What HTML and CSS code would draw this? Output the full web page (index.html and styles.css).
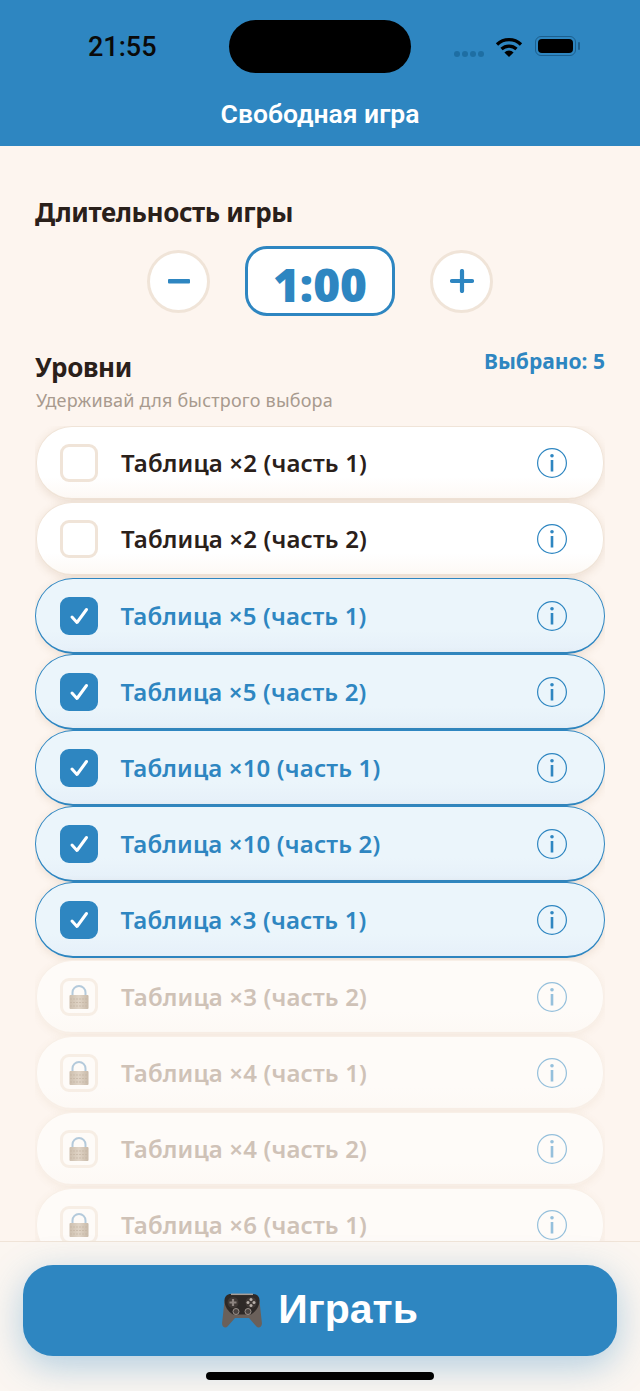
FILE: index.html
```html
<!DOCTYPE html>
<html lang="ru">
<head>
  <meta charset="UTF-8" />
  <meta name="viewport" content="width=device-width,initial-scale=1" />
  <title>Свободная игра</title>
  <link rel="stylesheet" href="styles.css">
</head>
<body>
  <svg class="sprites" width="0" height="0">
    <defs>
      <linearGradient id="lockBody" x1="0" y1="0" x2="1" y2="0">
        <stop offset="0" stop-color="#cdbfae"/>
        <stop offset=".5" stop-color="#e0d4c6"/>
        <stop offset="1" stop-color="#c9baa9"/>
      </linearGradient>
    </defs>
    <symbol id="info" viewBox="0 0 32 32">
      <circle cx="16" cy="16" r="14.4" fill="none" stroke="currentColor" stroke-width="1.2"/>
      <circle cx="16" cy="8.8" r="1.8" fill="currentColor"/>
      <rect x="14.7" y="13" width="2.6" height="11.5" fill="currentColor"/>
    </symbol>
    <symbol id="check" viewBox="0 0 38 38">
      <path d="M12 20l5 5.500 9.500-13" fill="none" stroke="#fff" stroke-width="3" stroke-linecap="round" stroke-linejoin="round"/>
    </symbol>
    <symbol id="lock" viewBox="0 0 20 24">
      <path d="M3.500 11V7.500a6.500 6.500 0 0 1 13 0V11" fill="none" stroke="#b4cadb" stroke-width="2"/>
      <rect x="0.500" y="10" width="19" height="14" rx="1" fill="url(#lockBody)"/>
      <path d="M1 14h18M1 17.500h18M1 21h18" stroke="#c4b5a4" stroke-width=".7" stroke-dasharray="2 1"/>
    </symbol>
  </svg>

  <div class="app">
    <header class="topbar">
      <div class="status">
        <span class="time">21:55</span>
        <div class="island"></div>
        <div class="status-icons">
          <span class="dots"><i></i><i></i><i></i><i></i></span>
          <svg class="wifi" width="28" height="21" viewBox="0 0 28 21">
            <path d="M2 7.500a17 17 0 0 1 24 0M6.500 12a11 11 0 0 1 15 0" fill="none" stroke="#000" stroke-width="3.200"/>
            <path d="M14 20l-4.600-4.600a6.600 6.600 0 0 1 9.200 0z" fill="#000"/>
          </svg>
          <span class="battery"><b></b></span>
        </div>
      </div>
      <h1>Свободная игра</h1>
    </header>

    <main class="content">
      <h2 class="heading">Длительность игры</h2>
      <div class="stepper">
        <div class="step-btn">
          <svg width="24" height="24" viewBox="0 0 24 24"><rect x="1" y="10" width="22" height="4.400" rx="1" fill="#2e86c1"/></svg>
        </div>
        <div class="step-value">1:00</div>
        <div class="step-btn">
          <svg width="24" height="24" viewBox="0 0 24 24"><path d="M2 12h20M12 2v20" stroke="#2e86c1" stroke-width="4.200" stroke-linecap="round"/></svg>
        </div>
      </div>

      <div class="levels-head">
        <h2 class="heading">Уровни</h2>
        <span class="picked">Выбрано: 5</span>
      </div>
      <p class="hint">Удерживай для быстрого выбора</p>

      <div class="levels">
        <div class="row"><span class="box"></span><span class="name">Таблица ×2 (часть 1)</span><svg class="info"><use href="#info"/></svg></div>
        <div class="row"><span class="box"></span><span class="name">Таблица ×2 (часть 2)</span><svg class="info"><use href="#info"/></svg></div>
        <div class="row on"><span class="box"><svg><use href="#check"/></svg></span><span class="name">Таблица ×5 (часть 1)</span><svg class="info"><use href="#info"/></svg></div>
        <div class="row on"><span class="box"><svg><use href="#check"/></svg></span><span class="name">Таблица ×5 (часть 2)</span><svg class="info"><use href="#info"/></svg></div>
        <div class="row on"><span class="box"><svg><use href="#check"/></svg></span><span class="name">Таблица ×10 (часть 1)</span><svg class="info"><use href="#info"/></svg></div>
        <div class="row on"><span class="box"><svg><use href="#check"/></svg></span><span class="name">Таблица ×10 (часть 2)</span><svg class="info"><use href="#info"/></svg></div>
        <div class="row on"><span class="box"><svg><use href="#check"/></svg></span><span class="name">Таблица ×3 (часть 1)</span><svg class="info"><use href="#info"/></svg></div>
        <div class="row locked"><span class="box"><svg class="lock"><use href="#lock"/></svg></span><span class="name">Таблица ×3 (часть 2)</span><svg class="info"><use href="#info"/></svg></div>
        <div class="row locked"><span class="box"><svg class="lock"><use href="#lock"/></svg></span><span class="name">Таблица ×4 (часть 1)</span><svg class="info"><use href="#info"/></svg></div>
        <div class="row locked"><span class="box"><svg class="lock"><use href="#lock"/></svg></span><span class="name">Таблица ×4 (часть 2)</span><svg class="info"><use href="#info"/></svg></div>
        <div class="row locked"><span class="box"><svg class="lock"><use href="#lock"/></svg></span><span class="name">Таблица ×6 (часть 1)</span><svg class="info"><use href="#info"/></svg></div>
      </div>
    </main>

    <footer class="bottom">
      <button class="play" type="button">
        <svg width="40" height="35" viewBox="0 0 40 35">
          <path d="M8 3h24c3 0 5 2 5.500 5l2.400 22c.3 4-3.400 6-5.400 3.500L27 25H13l-7.500 8.500C3.500 36 -.3 34 .1 30L2.500 8C3 5 5 3 8 3z" fill="#6a605a"/>
          <path d="M9 1h22c4 0 6.500 2.500 6.500 6.500 0 6-3.500 11-8.500 14H11c-5-3-8.500-8-8.500-14C2.500 3.500 5 1 9 1z" fill="#2e2927"/>
          <path d="M9 1.300h22" stroke="#a89e97" stroke-width="1.500"/>
          <circle cx="11" cy="9.500" r="5.500" fill="#3f3835"/>
          <circle cx="29" cy="9.500" r="5.500" fill="#3f3835"/>
          <path d="M11 6v7M7.500 9.500h7" stroke="#8d8480" stroke-width="2.200"/>
          <circle cx="29" cy="6.500" r="1.500" fill="#b8b0aa"/><circle cx="29" cy="12.500" r="1.500" fill="#b8b0aa"/>
          <circle cx="26" cy="9.500" r="1.500" fill="#b8b0aa"/><circle cx="32" cy="9.500" r="1.500" fill="#b8b0aa"/>
          <circle cx="14" cy="18.500" r="3" fill="#4a4340" stroke="#9a918b"/><circle cx="26" cy="18.500" r="3" fill="#4a4340" stroke="#9a918b"/>
        </svg>
        <span>Играть</span>
      </button>
      <div class="home-bar"></div>
    </footer>
  </div>
</body>
</html>
```

FILE: styles.css
```css
:root {
  --blue:#2e86c1;--bg:#fdf5ef;--line:#f0e4d8;--ink:#2a201a;
}
* {margin:0;padding:0;box-sizing:border-box}
body {background:var(--bg);font-family:"Noto Sans",sans-serif;color:var(--ink)}
.sprites {position:absolute}

.app {height:1391px;display:flex;flex-direction:column;overflow:hidden}

/* top */
.topbar {height:146px;flex-shrink:0;background:var(--blue);padding-top:20px}
.status {height:53px;display:flex;align-items:center;padding-left:88px}
.time {width:141px;font:500 27px/1 Roboto,sans-serif;color:#0a0a0a;padding-top:2px}
.island {width:182px;height:53px;border-radius:27px;background:#000}
.status-icons {display:flex;align-items:center;margin-left:43px}
.dots {display:flex;gap:2px;margin-top:14px}
.dots i {width:6px;height:6px;border-radius:50%;background:#1e6ea3}
.wifi {margin:1px 0 0 11px}
.battery {
  width:41px;height:20px;margin:-1px 0 0 12px;padding:2px;border:1px solid #1c5f8e;border-radius:6px;
  display:block;position:relative;
}
.battery b {display:block;height:100%;background:#000;border-radius:4px}
.battery:after {
  content:"";position:absolute;right:-5px;top:5px;width:2px;height:8px;background:#1c5f8e;border-radius:1px;
}
.topbar h1 {
  margin-top:26px;text-align:center;color:#fff;font:600 26.5px/30px Roboto,sans-serif;
}

/* content */
.content {flex:1;min-height:0;display:flex;flex-direction:column;padding:49px 35px 0}
.heading {font:700 26px/34px "Noto Sans",sans-serif;letter-spacing:-.4px;color:var(--ink)}
.stepper {display:flex;align-items:center;justify-content:center;gap:35px;margin-top:17px}
.step-btn {
  width:63px;height:63px;border-radius:50%;background:#fff;border:3px solid var(--line);
  display:flex;align-items:center;justify-content:center;
}
.step-value {
  width:150px;height:70px;border:3px solid var(--blue);border-radius:22px;background:#fff;
  color:var(--blue);font:900 46px/70px "Noto Sans",sans-serif;text-align:center;
}
.levels-head {display:flex;justify-content:space-between;align-items:flex-start;margin-top:34px}
.picked {font:700 21px/26px "Noto Sans",sans-serif;color:var(--blue);white-space:nowrap;margin-top:-2px}
.hint {font:400 18px/24px "Noto Sans",sans-serif;letter-spacing:.2px;color:#a89a8e;margin:4px 0 0 1px}

/* levels */
.levels {flex:1;min-height:0;overflow:hidden;margin-top:14px}
.row {
  height:74px;margin:0 1px 2px;padding:0 35px 0 23px;display:flex;align-items:center;
  background:linear-gradient(180deg,#fff 70%,#fdf9f5 100%);
  border:1px solid var(--line);border-bottom-width:2px;border-radius:36px;
  box-shadow:0 2px 8px rgba(150,110,70,.16);
}
.box {
  width:38px;height:38px;flex-shrink:0;border:3px solid var(--line);border-radius:9px;background:#fff;
  display:flex;align-items:center;justify-content:center;
}
.box svg {width:38px;height:38px;flex-shrink:0}
.name {flex:1;margin-left:23px;font:600 24px/30px "Noto Sans",sans-serif;letter-spacing:.15px;white-space:nowrap}
.info {width:32px;height:32px;color:var(--blue);flex-shrink:0}

.row.on {
  height:76px;margin:0;padding:0 36px 0 23.5px;background:linear-gradient(180deg,#ebf5fb 70%,#e6f0f9 100%);
  border:1.5px solid var(--blue);border-bottom-width:2px;border-radius:38px;
}
.row.on .box {background:var(--blue);border-color:var(--blue)}
.row.on .name {color:var(--blue)}

.row.locked {
  background:linear-gradient(180deg,#fefbf8 70%,#fdf9f5 100%);border-color:#f8efe7;
  box-shadow:0 2px 8px rgba(150,110,70,.08);margin-top:2px;margin-bottom:0;
}
.row.locked .box {background:transparent;border-color:#f7eee5}
.row.locked .box svg.lock {width:20px;height:24px}
.row.locked .name {color:#cfc2b7}
.row.locked .info {opacity:.5}

/* bottom */
.bottom {
  height:150px;flex-shrink:0;border-top:1px solid var(--line);background:#fbf6f1;
  padding:23px 23px 0;display:flex;flex-direction:column;align-items:center;
}
.play {
  width:100%;height:91px;border:none;border-radius:30px;background:var(--blue);color:#fff;
  display:flex;align-items:center;justify-content:center;gap:16px;
  font:700 41px/1 "Liberation Sans",sans-serif;
  box-shadow:0 10px 36px rgba(46,134,193,.36);
}
.play span {margin-top:-3px}
.home-bar {width:228px;height:8px;border-radius:4px;background:#000;margin-top:16px;position:relative}
```
